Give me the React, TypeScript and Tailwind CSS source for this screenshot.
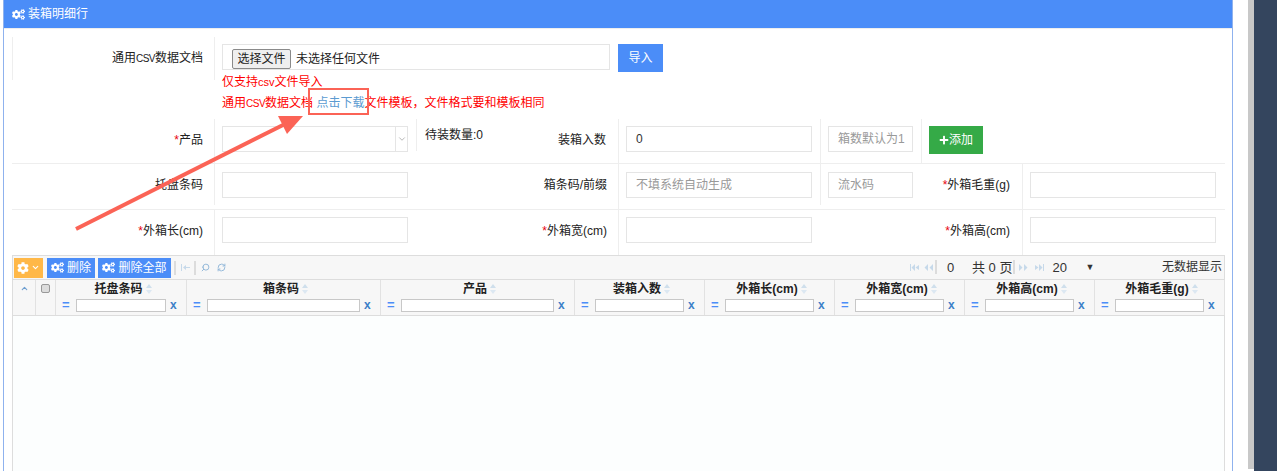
import { ChevronDown, ChevronUp, Search, RefreshCw } from "lucide-react"
import { FaCogs, FaCog, FaPlus } from "react-icons/fa"

const font = "font-['Liberation_Sans','Noto_Sans_CJK_SC',sans-serif]"

const columns = [
  { title: "托盘条码", width: "w-[131px]", input: "w-[90px]" },
  { title: "箱条码", width: "w-[194px]", input: "w-[153px]" },
  { title: "产品", width: "w-[194px]", input: "w-[153px]" },
  { title: "装箱入数", width: "w-[130px]", input: "w-[89px]" },
  { title: "外箱长(cm)", width: "w-[130px]", input: "w-[89px]" },
  { title: "外箱宽(cm)", width: "w-[130px]", input: "w-[89px]" },
  { title: "外箱高(cm)", width: "w-[130px]", input: "w-[89px]" },
  { title: "外箱毛重(g)", width: "w-[130px]", input: "w-[89px]" },
]

function Box({ width, text, placeholder }: { width: string; text?: string; placeholder?: string }) {
  return (
    <div className={`${width} flex h-[26px] items-center border border-[#e5e5e5] bg-white pl-[9px] text-xs`}>
      {text && <span className="text-[#333]">{text}</span>}
      {placeholder && <span className="text-[#999]">{placeholder}</span>}
    </div>
  )
}

function Label({ text, required, width = "w-[192px]" }: { text: string; required?: boolean; width?: string }) {
  return (
    <div className={`${width} shrink-0 pr-px pt-[13px] text-right text-xs leading-[16px] text-[#222]`}>
      {required && <span className="text-red-600">*</span>}
      {text}
    </div>
  )
}

function SortIcon() {
  return (
    <svg width="6" height="10" viewBox="0 0 6 10" className="ml-[3px] inline-block">
      <path d="M3 0 6 4H0z" fill="#cfdfec" />
      <path d="M3 10 0 6h6z" fill="#dce8f2" />
    </svg>
  )
}

function PagerIcon({ d }: { d: string }) {
  return (
    <svg width="9" height="7" viewBox="0 0 9 7" className="shrink-0">
      <path d={d} fill="#c6d9ea" />
    </svg>
  )
}

function ToolbarSep() {
  return <div className="h-[14px] w-[2px] shrink-0 bg-[#dcdcdc]" />
}

export default function App() {
  return (
    <div className={`${font} relative flex h-[471px] w-full overflow-hidden bg-white`}>
      <div className="w-[3px] shrink-0" />

      {/* panel */}
      <div className="w-[1230px] shrink-0 border-x border-[#8fb2ee]">
        <div className="flex h-[28px] items-center gap-[3px] bg-[#4b8df8] pl-[8px] text-xs text-white">
          <FaCogs className="h-[13px] w-[13px]" />
          <span>装箱明细行</span>
        </div>
        <div className="h-px bg-[#eeeeee]" />

        <div className="w-[1213px] pl-[8px] pt-[8px] box-content">
          {/* csv row */}
          <div className="flex h-[82px]">
            <div className="flex h-[43px] w-[203px] shrink-0 justify-end border-x border-[#eeeeee] pr-[11px] pt-[13px] text-xs leading-[16px] text-[#222]">
              <span>
                通用<span className="text-[10px] tracking-[-0.5px]">CSV</span>数据文档
              </span>
            </div>
            <div className="pl-[7px] pt-[7px]">
              <div className="flex items-start gap-[8px]">
                <div className="flex h-[26px] w-[388px] items-end border border-[#e5e5e5] pl-[9px] text-xs text-[#222]">
                  <div className="flex h-[20px] w-[59px] items-center justify-center rounded-[2px] border border-[#8a8a8a] bg-[#efefef]">
                    选择文件
                  </div>
                  <span className="ml-[5px] pb-[2px]">未选择任何文件</span>
                </div>
                <div className="flex h-[28px] w-[45px] items-center justify-center bg-[#4b8df8] text-xs text-white">
                  导入
                </div>
              </div>
              <div className="mt-[2px] text-xs leading-[16px] text-[#f00]">
                仅支持<span className="text-[11px]">csv</span>文件导入
              </div>
              <div className="mt-[5px] text-xs leading-[16px] text-[#f00]">
                通用<span className="text-[10px] tracking-[-0.5px]">CSV</span>数据文档{" "}
                <span className="text-[#5b9bd1]">点击下载</span>
                文件模板，文件格式要和模板相同
              </div>
            </div>
          </div>

          {/* 产品 row */}
          <div className="flex h-[45px] border-b border-[#eeeeee]">
            <Label text="产品" required />
            <div className="w-[11px] shrink-0 border-r border-[#eeeeee]" />
            <div className="flex w-[201px] shrink-0 pl-[7px] pt-[7px]">
              <div className="flex h-[26px] w-[186px] justify-end border border-[#e5e5e5]">
                <div className="flex w-[12px] items-center justify-center border-l border-[#e5e5e5]">
                  <ChevronDown className="h-[10px] w-[10px] text-[#aaaaaa]" />
                </div>
              </div>
            </div>
            <div className="h-[32px] w-[100px] shrink-0 border-l border-[#eeeeee] pl-[8px] pt-[8px] text-xs leading-[16px] text-[#222]">
              待装数量:0
            </div>
            <Label text="装箱入数" width="w-[91px]" />
            <div className="w-[11px] shrink-0" />
            <div className="flex w-[202px] shrink-0 border-l border-[#eeeeee] pl-[7px] pt-[7px]">
              <Box width="w-[186px]" text="0" />
            </div>
            <div className="flex w-[101px] shrink-0 border-l border-[#eeeeee] pl-[7px] pt-[7px]">
              <Box width="w-[85px]" placeholder="箱数默认为1" />
            </div>
            <div className="border-l border-[#eeeeee] pl-[7px] pt-[7px]">
              <div className="flex h-[28px] w-[54px] items-center justify-center bg-[#35aa47] text-xs text-white">
                <FaPlus className="h-[10px] w-[10px]" />
                添加
              </div>
            </div>
          </div>

          {/* 托盘条码 row */}
          <div className="flex h-[46px] border-b border-[#eeeeee]">
            <Label text="托盘条码" />
            <div className="h-[41px] w-[11px] shrink-0 border-r border-[#eeeeee]" />
            <div className="flex w-[201px] shrink-0 pl-[7px] pt-[8px]">
              <Box width="w-[186px]" />
            </div>
            <Label text="箱条码/前缀" />
            <div className="w-[11px] shrink-0 border-r border-[#eeeeee]" />
            <div className="w-[201px] shrink-0 pl-[7px] pt-[8px]">
              <Box width="w-[186px]" placeholder="不填系统自动生成" />
            </div>
            <div className="h-[41px] w-[101px] shrink-0 border-l border-[#eeeeee] pl-[7px] pt-[8px]">
              <Box width="w-[85px]" placeholder="流水码" />
            </div>
            <Label text="外箱毛重(g)" required width="w-[90px]" />
            <div className="w-[12px] shrink-0 border-r border-[#eeeeee]" />
            <div className="pl-[7px] pt-[8px]">
              <Box width="w-[186px]" />
            </div>
          </div>

          {/* 外箱长 row */}
          <div className="flex h-[45px]">
            <Label text="外箱长(cm)" required />
            <div className="w-[11px] shrink-0 border-r border-[#eeeeee]" />
            <div className="w-[201px] shrink-0 pl-[7px] pt-[7px]">
              <Box width="w-[186px]" />
            </div>
            <Label text="外箱宽(cm)" required />
            <div className="w-[11px] shrink-0 border-r border-[#eeeeee]" />
            <div className="w-[201px] shrink-0 pl-[7px] pt-[7px]">
              <Box width="w-[186px]" />
            </div>
            <Label text="外箱高(cm)" required width="w-[191px]" />
            <div className="w-[12px] shrink-0 border-r border-[#eeeeee]" />
            <div className="pl-[7px] pt-[7px]">
              <Box width="w-[186px]" />
            </div>
          </div>

          {/* grid */}
          <div className="h-[230px] border border-[#dddddd] bg-[#fcfefe]">
            <div className="flex h-[23px] items-center bg-[#f7f7f7] pl-[1px] text-xs">
              <div className="flex h-[20px] w-[29px] items-center justify-center gap-[2px] bg-[#ffb848] text-white">
                <FaCog className="h-[12px] w-[12px]" />
                <ChevronDown className="h-[9px] w-[9px]" strokeWidth={3} />
              </div>
              <div className="ml-[4px] flex h-[20px] w-[48px] items-center justify-center gap-[3px] bg-[#4b8df8] text-white">
                <FaCogs className="h-[13px] w-[13px]" />
                删除
              </div>
              <div className="ml-[3px] flex h-[20px] w-[73px] items-center justify-center gap-[3px] bg-[#4b8df8] text-white">
                <FaCogs className="h-[13px] w-[13px]" />
                删除全部
              </div>
              <div className="ml-[3px]">
                <ToolbarSep />
              </div>
              <div className="ml-[5px]">
                <PagerIcon d="M0 0h1v7H0zM2 3.5 5 1v2h4v1H5v2z" />
              </div>
              <div className="ml-[4px]">
                <ToolbarSep />
              </div>
              <Search className="ml-[5px] h-[9px] w-[9px] -scale-x-100 text-[#8fb5d8]" strokeWidth={2.5} />
              <RefreshCw className="ml-[7px] h-[9px] w-[9px] text-[#8fb5d8]" strokeWidth={2.5} />
              <div className="ml-auto flex w-[314px] items-center text-[#333]">
                <PagerIcon d="M0 0h1v7H0zM5 0v7L1.500 3.500zM9 1v5L5.500 3.500z" />
                <div className="ml-[5px]">
                  <PagerIcon d="M4 0v7L.5 3.500zM9 0v7L5.500 3.500z" />
                </div>
                <div className="ml-[2px]">
                  <ToolbarSep />
                </div>
                <span className="ml-[10px] w-[23px] text-[13px]">0</span>
                <span className="ml-[2px] text-[13px]">共 0 页</span>
                <div className="ml-[1px]">
                  <ToolbarSep />
                </div>
                <div className="ml-[4px]">
                  <PagerIcon d="M0 0v7l3.500-3.500zM5 0v7l3.500-3.500z" />
                </div>
                <div className="ml-[7px]">
                  <PagerIcon d="M0 1v5l3.500-2.500zM4 0v7l3.500-3.500zM8 0h1v7H8z" />
                </div>
                <span className="ml-[8px] w-[33px] text-[13px]">20</span>
                <span className="text-[9px]">▼</span>
                <span className="ml-auto pr-[2px]">无数据显示</span>
              </div>
            </div>

            <div className="flex h-[37px] border-y border-[#dddddd] bg-[#f7f7f7] text-xs">
              <div className="flex w-[23px] shrink-0 justify-center border-r border-[#e2e2e2] pt-[4px]">
                <ChevronUp className="h-[9px] w-[9px] text-[#6f9fd0]" strokeWidth={3} />
              </div>
              <div className="flex w-[20px] shrink-0 justify-center border-r border-[#e2e2e2] pt-[4px]">
                <div className="h-[9px] w-[9px] rounded-[2px] border border-[#999999] bg-[#dddddd]" />
              </div>
              {columns.map((c) => (
                <div key={c.title} className={`${c.width} shrink-0 border-r border-[#e2e2e2]`}>
                  <div className="flex h-[18px] items-center justify-center pl-[4px] font-bold leading-none text-[#222]">
                    {c.title}
                    <SortIcon />
                  </div>
                  <div className="flex items-center pl-[6px]">
                    <span className="w-[14px] text-[13px] font-bold leading-[14px] text-[#4b8df8]">=</span>
                    <div className={`${c.input} h-[13px] border border-[#c8c8c8] bg-white`} />
                    <span className="ml-[4px] text-xs font-bold leading-[14px] text-[#3c7fc8]">x</span>
                  </div>
                </div>
              ))}
            </div>
          </div>
        </div>
      </div>

      <div className="w-[15px] shrink-0" />
      <div className="h-[469px] w-[6px] shrink-0 bg-[#c8c8c8]" />
      <div className="flex-1 bg-[#34455e]" />

      {/* annotation over the form */}
      <div className="absolute left-[308px] top-[88px] h-[27px] w-[61px] border-2 border-[#fb6356]" />
      <svg className="absolute left-0 top-0" width="400" height="260" viewBox="0 0 400 260">
        <line x1="76" y1="229" x2="285" y2="124" stroke="#fb6356" strokeWidth="4" />
        <path d="M303 116 278 116 287 134z" fill="#fb6356" />
      </svg>
    </div>
  )
}
